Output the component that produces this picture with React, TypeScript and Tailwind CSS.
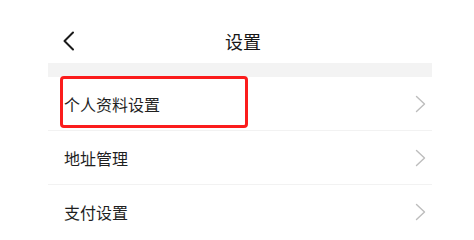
import React from "react"

const items = ["个人资料设置", "地址管理", "支付设置"]

function ChevronRight() {
  return (
    <svg width="12" height="18" viewBox="0 0 12 18" fill="none" className="shrink-0">
      <polyline points="1.5,1.5 9.5,9 1.5,16.5" stroke="#bdbdbd" strokeWidth="1.4" strokeLinecap="round" strokeLinejoin="round" />
    </svg>
  )
}

export default function App() {
  return (
    <div className="w-[474px] h-[233px] overflow-hidden bg-white font-['Noto_Sans_CJK_SC',sans-serif]">
      <div className="relative mx-[48px] w-[384px]">
        {/* header */}
        <div className="flex items-center h-[63px] pt-[19px] pl-[14px]">
          <svg width="14" height="20" viewBox="0 0 14 20" fill="none">
            <polyline points="11,1.5 2.5,10 11,18.5" stroke="#1a1a1a" strokeWidth="2" strokeLinecap="round" strokeLinejoin="round" />
          </svg>
          <span className="ml-[149px] text-[18px] leading-none text-[#161616]">设置</span>
        </div>
        <div className="h-[14px] bg-[#f3f3f3]" />

        {items.map((label, i) => (
          <div
            key={label}
            className={
              i < items.length - 1
                ? "flex items-center justify-between h-[54px] pl-[16px] pr-[5px] border-b border-[#f2f2f2]"
                : "flex items-center justify-between h-[54px] pl-[16px] pr-[5px]"
            }
          >
            <span className="text-[16px] leading-none text-[#1f1f1f]">{label}</span>
            <ChevronRight />
          </div>
        ))}

        {/* highlight annotation */}
        <div className="absolute left-[12px] top-[76px] w-[188px] h-[52px] border-[3px] border-[#fb1c1c] rounded-[4px]" />
      </div>
    </div>
  )
}
